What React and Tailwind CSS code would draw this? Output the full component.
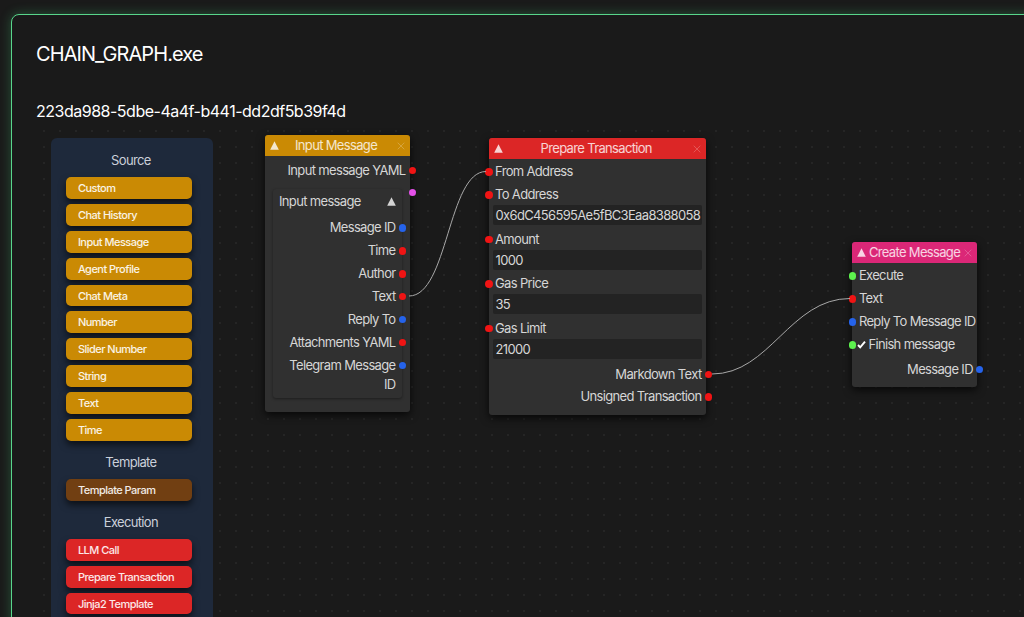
// App.jsx - chain graph editor: node palette on the left, node canvas on the right
import React from 'react';

const PALETTE = [
  {
    title: 'Source',
    color: 'bg-[#ca8a04]',
    items: [
      'Custom',
      'Chat History',
      'Input Message',
      'Agent Profile',
      'Chat Meta',
      'Number',
      'Slider Number',
      'String',
      'Text',
      'Time',
    ],
  },
  { title: 'Template', color: 'bg-[#713f12]', items: ['Template Param'] },
  { title: 'Execution', color: 'bg-[#dc2626]', items: ['LLM Call', 'Prepare Transaction', 'Jinja2 Template'] },
];

const MESSAGE_FIELDS = [
  { label: 'Message ID', color: 'blue' },
  { label: 'Time', color: 'red' },
  { label: 'Author', color: 'red' },
  { label: 'Text', color: 'red' },
  { label: 'Reply To', color: 'blue' },
  { label: 'Attachments YAML', color: 'red' },
];

const TX_INPUTS = [
  { label: 'To Address', value: '0x6dC456595Ae5fBC3Eaa8388058' },
  { label: 'Amount', value: '1000' },
  { label: 'Gas Price', value: '35' },
  { label: 'Gas Limit', value: '21000' },
];

const socketColors = {
  red: 'bg-[#f01414]',
  blue: 'bg-[#2563eb]',
  green: 'bg-[#5df24e]',
  pink: 'bg-[#e350e8]',
};

// Small round connector that sits on the edge of a node
function Socket({ color }) {
  return <span className={`size-[7.5px] shrink-0 rounded-full ${socketColors[color]}`} />;
}

// Row with the socket on the left edge
function InputRow({ color, children }) {
  return (
    <div className="-ml-[3.5px] flex h-[22.9px] items-center gap-[2.5px] whitespace-nowrap">
      <Socket color={color} />
      {children}
    </div>
  );
}

// Row with the socket on the right edge
function OutputRow({ label, color }) {
  return (
    <div className="-mr-[6px] flex h-[22.9px] items-center justify-end gap-[3px] whitespace-nowrap">
      {label}
      <Socket color={color} />
    </div>
  );
}

function Triangle({ className }) {
  return (
    <svg viewBox="0 0 9 9" className={`size-[9px] shrink-0 ${className}`}>
      <path d="M4.5 0.3 L8.8 8.8 H0.2 Z" fill="currentColor" />
    </svg>
  );
}

function Cross() {
  return (
    <svg viewBox="0 0 8 8" className="size-2 shrink-0 text-white/25">
      <path d="M0.7 0.7 L7.3 7.3 M7.3 0.7 L0.7 7.3" stroke="currentColor" strokeWidth="0.9" />
    </svg>
  );
}

function Node({ title, headerClass, titleClass, className, children }) {
  return (
    <div className={`absolute rounded-[3px] bg-[#303030] shadow-[0_3px_9px_rgba(0,0,0,0.75)] ${className}`}>
      <div className={`flex h-[21px] items-center rounded-t-[3px] px-[5px] ${headerClass}`}>
        <Triangle className="text-white/80" />
        <span className={`flex-1 whitespace-nowrap text-white/80 ${titleClass}`}>{title}</span>
        <Cross />
      </div>
      {children}
    </div>
  );
}

function Palette() {
  return (
    <div className="flex h-[600px] w-[162px] flex-col gap-[11px] rounded-md bg-[#1e293b] pl-[15.4px] pr-[20.6px] pt-3">
      {PALETTE.map((group) => (
        <div key={group.title} className="flex flex-col gap-[5px]">
          <div className="pb-px pl-[3px] text-center leading-[21px] text-[#cbd0da]">{group.title}</div>
          {group.items.map((item) => (
            <div
              key={item}
              className={`h-[21.9px] rounded-[5px] pl-[11.5px] text-[11px] font-medium leading-[22px] tracking-[-0.52px] text-white/90 shadow-[0_4px_7px_rgba(0,0,0,0.6)] ${group.color}`}
            >
              {item}
            </div>
          ))}
        </div>
      ))}
    </div>
  );
}

function InputMessageNode() {
  return (
    <Node title="Input Message" headerClass="bg-[#ca8a04]" titleClass="pl-[16px]" className="left-[229px] top-[11px] h-[277px] w-[145px]">
      <div className="pt-[3px]">
        <OutputRow label="Input message YAML" color="red" />
      </div>
      <div className="mx-2 mt-[7px] h-[209px] rounded-[3px] bg-[#303030] shadow-[0_1px_3px_rgba(0,0,0,0.4)]">
        <div className="flex h-[25px] items-center justify-between px-[6px]">
          Input message
          <Triangle className="text-[#d4d4d4]" />
        </div>
        <div className="mr-[2px] pt-[2.7px]">
          {MESSAGE_FIELDS.map((f) => (
            <OutputRow key={f.label} label={f.label} color={f.color} />
          ))}
          <div className="-mr-[6px] flex justify-end gap-[3px] pt-[2.5px] text-right leading-[18.5px]">
            <span>
              Telegram Message
              <br />
              ID
            </span>
            <span className="flex h-[18px] items-center">
              <Socket color="blue" />
            </span>
          </div>
        </div>
      </div>
      {/* Output of the whole message group */}
      <span className="absolute -right-[6px] top-[53.5px] flex">
        <Socket color="pink" />
      </span>
    </Node>
  );
}

function PrepareTransactionNode() {
  return (
    <Node title="Prepare Transaction" headerClass="bg-[#dc2626]" titleClass="text-center pr-[3px]" className="left-[452.5px] top-[14px] h-[277px] w-[217.5px]">
      <div className="flex flex-col pt-[1.5px]">
        <InputRow color="red">From Address</InputRow>
        {TX_INPUTS.map((f) => (
          <div key={f.label} className="h-[44.5px]">
            <InputRow color="red">{f.label}</InputRow>
            <div className="mx-1 -mt-[1.2px] h-[20px] rounded-[2px] bg-[#232323] pl-[3px] leading-[21px] whitespace-nowrap">
              {f.value}
            </div>
          </div>
        ))}
        <div className="pt-[1.5px]">
          <OutputRow label="Markdown Text" color="red" />
          <OutputRow label="Unsigned Transaction" color="red" />
        </div>
      </div>
    </Node>
  );
}

function CreateMessageNode() {
  return (
    <Node title="Create Message" headerClass="bg-[#db2777]" titleClass="pl-[2.5px]" className="left-[816.4px] top-[118px] h-[145px] w-[125px]">
      <div className="flex flex-col pt-[1.8px]">
        <InputRow color="green">Execute</InputRow>
        <InputRow color="red">Text</InputRow>
        <InputRow color="blue">Reply To Message ID</InputRow>
        <InputRow color="green">
          <svg viewBox="0 0 9 9" className="-ml-[2px] size-[9px] text-white">
            <path d="M1 5 L3.2 7.4 L8 1.6" fill="none" stroke="currentColor" strokeWidth="1.9" />
          </svg>
          Finish message
        </InputRow>
        <div className="pt-[1.5px]">
          <OutputRow label="Message ID" color="blue" />
        </div>
      </div>
    </Node>
  );
}

// Connection lines between sockets
function Wires() {
  return (
    <svg className="pointer-events-none absolute inset-0 size-full" fill="none" stroke="#a8a8a8" strokeWidth="1">
      <path d="M373 172 C412 172 412 47.5 450 47.5" />
      <path d="M676 250 C734 250 754 174.5 814 174.5" />
    </svg>
  );
}

export default function App() {
  return (
    <div className="h-[617px] w-full overflow-hidden bg-[#1a1a1a] pl-[11px] pt-[14px] font-['Inter',sans-serif]">
      <div className="h-[640px] w-[1040px] rounded-lg border border-[#58d68b] bg-[#1a1a1a] pl-6 pt-[25px] shadow-[0_0_12px_rgba(74,222,128,0.3)]">
        <h1 className="text-[20px] leading-[29px] tracking-[-0.92px] text-white">CHAIN_GRAPH.exe</h1>
        <div className="mt-[30px] text-[16px] leading-[25px] tracking-[-0.49px] text-white">
          223da988-5dbe-4a4f-b441-dd2df5b39f4d
        </div>
        <div className="relative h-[530px] bg-[radial-gradient(circle,#252525_0.8px,transparent_1.2px)] bg-[size:16px_16px] bg-[position:0px_-1px] pl-[15px] pt-[14px] text-[13px] tracking-[-0.66px] text-[#d6d6d6]">
          <Palette />
          <InputMessageNode />
          <PrepareTransactionNode />
          <CreateMessageNode />
          <Wires />
        </div>
      </div>
    </div>
  );
}
